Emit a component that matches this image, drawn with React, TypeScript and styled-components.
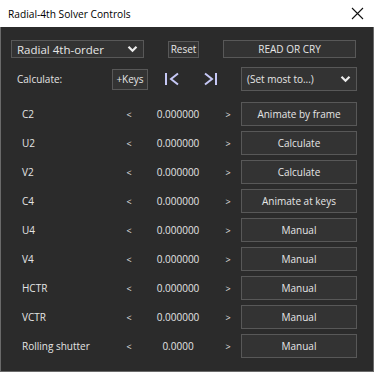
import React from "react";
import styled, { createGlobalStyle } from "styled-components";

const GlobalStyle = createGlobalStyle`
  html, body {
    margin: 0;
    padding: 0;
    background: #2b2b2b;
  }
  * {
    box-sizing: border-box;
  }
`;

const font = `"Open Sans", "Noto Sans", sans-serif`;

const params = [
  { name: "C2", value: "0.000000", mode: "Animate by frame" },
  { name: "U2", value: "0.000000", mode: "Calculate" },
  { name: "V2", value: "0.000000", mode: "Calculate" },
  { name: "C4", value: "0.000000", mode: "Animate at keys" },
  { name: "U4", value: "0.000000", mode: "Manual" },
  { name: "V4", value: "0.000000", mode: "Manual" },
  { name: "HCTR", value: "0.000000", mode: "Manual" },
  { name: "VCTR", value: "0.000000", mode: "Manual" },
  { name: "Rolling shutter", value: "0.0000", mode: "Manual" },
];

const Chevron = () => (
  <svg width="11" height="8" viewBox="0 0 11 8">
    <path d="M1.5 1.8 L5.5 5.8 L9.5 1.8" fill="none" stroke="#ececec" strokeWidth="2.2" />
  </svg>
);

const SkipBack = () => (
  <svg width="16" height="14" viewBox="0 0 16 14">
    <path d="M2 1 V13" stroke="#c6c8f6" strokeWidth="2" />
    <path d="M14 1.5 L7 7 L14 12.5" fill="none" stroke="#c6c8f6" strokeWidth="2" />
  </svg>
);

const SkipForward = () => (
  <svg width="16" height="14" viewBox="0 0 16 14">
    <path d="M2 1.5 L9 7 L2 12.5" fill="none" stroke="#c6c8f6" strokeWidth="2" />
    <path d="M13 1 V13" stroke="#c6c8f6" strokeWidth="2" />
  </svg>
);

const App = () => {
  return (
    <>
      <GlobalStyle />
      <Window>
        <TitleBar>
          <Title>Radial-4th Solver Controls</Title>
          <CloseButton>
            <svg width="13" height="13" viewBox="0 0 13 13">
              <path d="M1 1 L12 12 M12 1 L1 12" stroke="#111" strokeWidth="1.1" />
            </svg>
          </CloseButton>
        </TitleBar>
        <Body>
          <TopRow>
            <Select $width={133} $height={18} $size={11.5}>
              <span>Radial 4th-order</span>
              <Chevron />
            </Select>
            <Button $width={31} $height={17}>Reset</Button>
            <Button $width={133} $height={18}>READ OR CRY</Button>
          </TopRow>
          <ToolRow>
            <ToolLabel>Calculate:</ToolLabel>
            <Button $width={36} $height={21}>+Keys</Button>
            <IconButton $width={48}>
              <SkipBack />
            </IconButton>
            <IconButton $width={30}>
              <SkipForward />
            </IconButton>
            <ToolSelect $width={116} $height={24}>
              <span>(Set most to...)</span>
              <Chevron />
            </ToolSelect>
          </ToolRow>
          <ParamList>
            {params.map((p) => (
              <ParamRow key={p.name}>
                <ParamName>{p.name}</ParamName>
                <Arrow>&lt;</Arrow>
                <Value>{p.value}</Value>
                <Arrow>&gt;</Arrow>
                <Button $width={116} $height={24}>{p.mode}</Button>
              </ParamRow>
            ))}
          </ParamList>
        </Body>
      </Window>
    </>
  );
};

export default App;

const Window = styled.div`
  display: flex;
  flex-direction: column;
  width: 374px;
  height: 372px;
  font-family: ${font};
`;

const TitleBar = styled.div`
  display: flex;
  align-items: center;
  justify-content: space-between;
  height: 27px;
  padding: 0 9px 0 8px;
  background: #ffffff;
`;

const Title = styled.span`
  font-size: 10.2px;
  color: #000000;
`;

const CloseButton = styled.div`
  display: flex;
  align-items: center;
  justify-content: center;
  width: 16px;
  height: 16px;
`;

const Body = styled.div`
  display: flex;
  flex-direction: column;
  flex: 1;
  padding: 13px 16px 0 10px;
  background: #2b2b2b;
  border-left: 1px solid #6a6a6a;
  border-right: 1px solid #6a6a6a;
  border-bottom: 1px solid #6a6a6a;
  color: #e4e4e4;
  font-size: 10px;
`;

const TopRow = styled.div`
  display: flex;
  align-items: center;
  height: 18px;
  gap: 24px;
`;

const Button = styled.div<{ $width: number; $height: number; $size?: number }>`
  display: flex;
  align-items: center;
  justify-content: center;
  width: ${(p) => p.$width}px;
  height: ${(p) => p.$height}px;
  background: #333333;
  border: 1px solid #585858;
  color: #e6e6e6;
  font-size: ${(p) => p.$size ?? 10}px;
  white-space: nowrap;
`;

const Select = styled(Button)`
  justify-content: space-between;
  padding: 0 5px 0 5px;
`;

const ToolSelect = styled(Select)`
  margin-left: 15px;
`;

const ToolRow = styled.div`
  display: flex;
  align-items: center;
  height: 24px;
  margin-top: 9px;
`;

const ToolLabel = styled.span`
  width: 101px;
  padding-left: 6px;
`;

const IconButton = styled.div<{ $width: number }>`
  display: flex;
  align-items: center;
  justify-content: center;
  width: ${(p) => p.$width}px;
  height: 21px;
`;

const ParamList = styled.div`
  display: flex;
  flex-direction: column;
  gap: 5px;
  margin-top: 11px;
`;

const ParamRow = styled.div`
  display: grid;
  grid-template-columns: 111px 14px 84px 16px 116px;
  align-items: center;
  height: 24px;
  & > :last-child {
    margin-left: 5px;
  }
`;

const ParamName = styled.span`
  padding-left: 11px;
`;

const Arrow = styled.span`
  text-align: center;
  font-size: 9px;
`;

const Value = styled.span`
  text-align: center;
`;
